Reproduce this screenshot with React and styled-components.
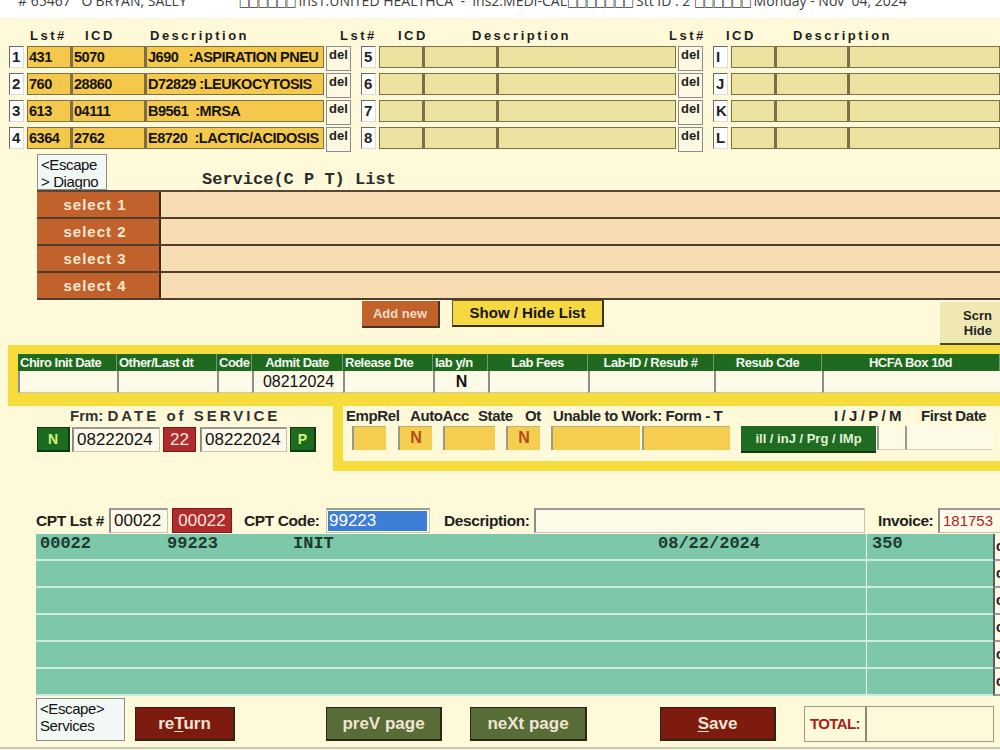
import React from 'react';
import styled, { createGlobalStyle } from 'styled-components';

const GlobalStyle = createGlobalStyle`
  html, body {
    margin: 0;
    padding: 0;
  }
  body {
    width: 1000px;
    height: 750px;
    overflow: hidden;
    background: #fefad9;
    font-family: "Liberation Sans", Arial, sans-serif;
  }
`;

const Screen = styled.div`
  width: 1000px;
  height: 750px;
  overflow: hidden;
  display: flex;
  flex-direction: column;
  background: #fefad9;
`;

const TopBar = styled.div`
  flex: none;
  height: 18px;
  overflow: hidden;
  background: #ffffff;
  display: flex;
  font-family: "Open Sans", "DejaVu Sans", sans-serif;
  font-size: 14px;
  color: #3c3c3c;
  white-space: pre;
`;

const TopText = styled.span`
  margin-top: -9px;
  margin-left: ${p => p.$ml}px;
`;

const Tofu = styled.span`
  font-family: "DejaVu Sans", sans-serif;
  font-size: 12px;
  letter-spacing: -2px;
  color: #3c3c3c;
`;

/* diagnosis lists */
const DiagHead = styled.div`
  display: flex;
  height: 18px;
  padding-top: 10px;
  padding-left: 30px;
`;

const HeadLabel = styled.div`
  width: ${p => p.$w}px;
  flex: none;
  font-weight: bold;
  font-size: 13px;
  letter-spacing: 2.5px;
  color: #1e1e1e;
  white-space: nowrap;
`;

const DiagRows = styled.div`
  display: flex;
  flex-direction: column;
  gap: 2px;
  padding-left: 9px;
`;

const DiagRow = styled.div`
  display: flex;
  gap: 10px;
`;

const DiagGroup = styled.div`
  display: flex;
  align-items: flex-start;
  width: ${p => (p.$last ? 'auto' : '342px')};
  flex: ${p => (p.$last ? '1' : 'none')};
  overflow: hidden;
`;

const NumBox = styled.div`
  flex: none;
  width: 15px;
  height: 22px;
  box-sizing: border-box;
  margin-right: 3px;
  background: #ffffff;
  border: 1px solid;
  border-color: #6a6a6a #dcdcdc #dcdcdc #6a6a6a;
  font-size: 15px;
  font-weight: bold;
  line-height: 20px;
  padding-left: 2px;
  color: #222;
`;

const DiagCell = styled.div`
  flex: ${p => (p.$w ? 'none' : '1')};
  width: ${p => (p.$w ? `${p.$w}px` : 'auto')};
  height: 22px;
  box-sizing: border-box;
  background: ${p => (p.$filled ? '#f4c84b' : '#ece3a0')};
  border: 1px solid #7d7048;
  border-left-width: ${p => (p.$first ? 1 : 2)}px;
  font-weight: bold;
  font-size: 14.5px;
  letter-spacing: -0.5px;
  line-height: 20px;
  padding-left: 1px;
  white-space: pre;
  overflow: hidden;
  color: #141414;
`;

const DelBox = styled.div`
  flex: none;
  width: 25px;
  height: 25px;
  box-sizing: border-box;
  margin-left: 2px;
  background: #fcf8e2;
  border: 1px solid #8c8c8c;
  font-weight: bold;
  font-size: 13px;
  text-align: center;
  line-height: 16px;
  color: #222;
`;

/* service list */
const ServiceHead = styled.div`
  display: flex;
  align-items: flex-end;
  margin-top: 2px;
  padding-left: 37px;
`;

const EscapeBox = styled.div`
  flex: none;
  width: ${p => p.$w}px;
  height: ${p => p.$h}px;
  margin-top: ${p => p.$mt || 0}px;
  box-sizing: border-box;
  background: #f2f9f5;
  border: 1px solid #8e8e8e;
  font-size: 15px;
  line-height: 17px;
  padding: 1px 0 0 3px;
  color: #111;
  letter-spacing: -0.4px;
  white-space: nowrap;
  overflow: hidden;
`;

const ServiceTitle = styled.div`
  margin-left: 95px;
  font-family: "Liberation Mono", "Courier New", monospace;
  font-weight: bold;
  font-size: 17px;
  color: #2c2c2c;
  line-height: 18px;
  padding-bottom: 1px;
`;

const SelectList = styled.div`
  margin-left: 37px;
  border-top: 2px solid #5a4636;
  display: flex;
  flex-direction: column;
`;

const SelectRow = styled.div`
  display: flex;
  height: 25px;
  border-bottom: 2px solid #4e3e30;
`;

const SelectBtn = styled.div`
  flex: none;
  width: 124px;
  background: #c1612b;
  border-right: 2px solid #3b2a1c;
  color: #fbe8d2;
  font-weight: bold;
  font-size: 15px;
  letter-spacing: 1px;
  text-align: center;
  line-height: 25px;
  padding-right: 6px;
  box-sizing: border-box;
`;

const SelectBody = styled.div`
  flex: 1;
  background: #f8dcb2;
`;

const ActionRow = styled.div`
  display: flex;
  align-items: flex-start;
  height: 45px;
  padding-left: 362px;
`;

const AddNew = styled.div`
  flex: none;
  margin-top: 1px;
  width: 78px;
  height: 27px;
  box-sizing: border-box;
  background: #c1612b;
  border-right: 2px solid #4a3020;
  border-bottom: 2px solid #4a3020;
  color: #f6dcc4;
  font-weight: bold;
  font-size: 13px;
  text-align: center;
  line-height: 25px;
`;

const ShowHide = styled.div`
  flex: none;
  margin: 0 0 0 12px;
  width: 152px;
  height: 27px;
  box-sizing: border-box;
  background: #f6d843;
  border: 1px solid #6a5a20;
  border-bottom: 2px solid #3a3210;
  border-right: 2px solid #3a3210;
  font-weight: bold;
  font-size: 15px;
  text-align: center;
  line-height: 23px;
  color: #151515;
`;

const ScrnHide = styled.div`
  flex: none;
  margin-left: auto;
  margin-top: 2px;
  width: 60px;
  height: 43px;
  box-sizing: border-box;
  background: #efe8b3;
  border-bottom: 2px solid #4a4530;
  font-weight: bold;
  font-size: 13px;
  line-height: 15px;
  text-align: right;
  padding: 6px 8px 0 0;
  color: #222;
`;

/* chiro frame */
const ChiroFrame = styled.div`
  margin-left: 8px;
  border: 9px solid #f6dc3d;
  border-left-width: 10px;
  border-right: 0;
  border-bottom-width: 13px;
  background: #fefad9;
`;

const ChiroGrid = styled.div`
  display: grid;
  grid-template-columns: 99px 100px 35px 91px 90px 55px 100px 126px 108px 1fr;
  grid-template-rows: 17px 22px;
`;

const ChiroHead = styled.div`
  background: #1f6a1f;
  color: #f4f8ee;
  font-weight: bold;
  font-size: 13px;
  letter-spacing: -0.5px;
  line-height: 17px;
  text-align: ${p => p.$align || 'left'};
  padding: 0 2px;
  border-right: 1px solid #6f9a6f;
  white-space: nowrap;
  overflow: hidden;
`;

const ChiroCell = styled.div`
  background: #fdfae8;
  border-left: 2px solid #8e8e8e;
  border-bottom: 1px solid #cfcab0;
  font-size: 16px;
  font-weight: ${p => (p.$bold ? 'bold' : 'normal')};
  text-align: center;
  line-height: 21px;
  color: #111;
`;

/* date of service + accident panel */
const LowerRow = styled.div`
  display: flex;
  height: 65px;
`;

const DateService = styled.div`
  flex: none;
  width: 333px;
`;

const DateLabel = styled.div`
  padding: 1px 0 0 70px;
  font-weight: bold;
  font-size: 15px;
  color: #333;
  letter-spacing: 3px;
  line-height: 17px;
  white-space: nowrap;
`;

const Plain = styled.span`
  letter-spacing: 0;
`;

const DateControls = styled.div`
  display: flex;
  margin-top: 3px;
  padding-left: 37px;
`;

const GreenSq = styled.div`
  flex: none;
  width: ${p => p.$w}px;
  height: 25px;
  margin-left: ${p => p.$ml || 0}px;
  box-sizing: border-box;
  background: #1d6b1e;
  border: 1px solid #0f3a10;
  border-right-width: 2px;
  border-bottom-width: 2px;
  color: #d6f07c;
  font-weight: bold;
  font-size: 14px;
  text-align: center;
  line-height: 22px;
`;

const TextBox = styled.div`
  flex: none;
  width: ${p => p.$w}px;
  height: ${p => p.$h || 25}px;
  margin-left: ${p => p.$ml || 0}px;
  box-sizing: border-box;
  background: #fdfae8;
  border: 1px solid #c9c4a8;
  border-left: 2px solid #8c8c8c;
  border-top: 2px solid #9a9a9a;
  font-size: ${p => p.$fs || 17}px;
  line-height: 21px;
  padding-left: 3px;
  color: ${p => p.$color || '#111'};
  white-space: nowrap;
  overflow: hidden;
`;

const RedBox = styled.div`
  flex: none;
  width: ${p => p.$w}px;
  height: 25px;
  margin-left: ${p => p.$ml || 0}px;
  box-sizing: border-box;
  background: #b02c2c;
  border: 1px solid #7a1a1a;
  color: #f6e6e0;
  font-size: 17px;
  text-align: center;
  line-height: 23px;
`;

const AccidentFrame = styled.div`
  flex: 1;
  box-sizing: border-box;
  border-left: 10px solid #f6dc3d;
  border-bottom: 10px solid #f6dc3d;
`;

const AccLabels = styled.div`
  display: flex;
  padding: 1px 0 0 3px;
  height: 19px;
`;

const AccLabel = styled.div`
  flex: none;
  width: ${p => p.$w}px;
  font-weight: bold;
  font-size: 15px;
  letter-spacing: -0.4px;
  line-height: 18px;
  color: #262626;
  white-space: nowrap;
`;

const AccFields = styled.div`
  display: flex;
  padding-left: 9px;
`;

const YellowField = styled.div`
  flex: none;
  width: ${p => p.$w}px;
  height: 24px;
  margin-left: ${p => p.$ml || 0}px;
  box-sizing: border-box;
  background: #f5ce4f;
  border-left: 2px solid #9a9a8a;
  border-top: 1px solid #c2b070;
  font-weight: bold;
  font-size: 16px;
  color: #b54a1b;
  text-align: center;
  line-height: 22px;
`;

const GreenBtn = styled.div`
  flex: none;
  width: 135px;
  height: 27px;
  margin-left: 11px;
  box-sizing: border-box;
  background: #1f6b21;
  border-bottom: 2px solid #0f3a10;
  color: #e2f2d4;
  font-weight: bold;
  font-size: 13px;
  text-align: center;
  line-height: 25px;
`;

const BlankCell = styled.div`
  flex: none;
  width: ${p => p.$w}px;
  height: 24px;
  margin-left: ${p => p.$ml || 0}px;
  box-sizing: border-box;
  background: #fdfae8;
  border-left: 2px solid #9a9a9a;
  border-bottom: 1px solid #d4cfb4;
`;

/* CPT entry */
const CptRow = styled.div`
  display: flex;
  align-items: center;
  margin-top: 37px;
  padding-left: 36px;
  height: 25px;
`;

const CptLabel = styled.div`
  flex: none;
  margin-left: ${p => p.$ml || 0}px;
  width: ${p => p.$w}px;
  font-weight: bold;
  font-size: 15.5px;
  letter-spacing: -0.4px;
  color: #1e1e1e;
  white-space: nowrap;
`;

const SelectedBox = styled.div`
  flex: none;
  width: 104px;
  height: 25px;
  box-sizing: border-box;
  background: #fdfae8;
  border: 1px solid #c9c4a8;
  border-top: 2px solid #9a9a9a;
  padding: 1px 2px 1px 1px;
`;

const Highlight = styled.div`
  height: 100%;
  background: #3d7ed6;
  color: #ffffff;
  font-size: 17px;
  line-height: 20px;
  padding-left: 1px;
`;

/* service grid */
const ServiceGrid = styled.div`
  margin-top: 1px;
  margin-left: 36px;
  display: flex;
  flex-direction: column;
`;

const GridRow = styled.div`
  display: grid;
  grid-template-columns: 127px 126px 365px 212px 127px 1fr;
  height: 27px;
`;

const GridCell = styled.div`
  background: #7dc8aa;
  border-bottom: 2px solid #cfeadf;
  border-left: ${p => (p.$divider ? '1px solid #eaf6ef' : '0')};
  font-family: "Liberation Mono", "Courier New", monospace;
  font-weight: bold;
  font-size: 17px;
  line-height: 20px;
  padding-left: ${p => p.$pl ?? 4}px;
  color: #1d3a30;
  white-space: pre;
`;

const TailCell = styled.div`
  background: #fdfae8;
  border-left: 2px solid #5a5a5a;
  border-bottom: 2px solid #9a9a9a;
  font-weight: bold;
  font-size: 14px;
  line-height: 24px;
  padding-left: 1px;
  overflow: hidden;
  color: #222;
`;

/* footer */
const Footer = styled.div`
  display: flex;
  align-items: flex-start;
  height: 51px;
  padding-left: 36px;
  border-bottom: 2px solid #c9c8bd;
`;

const FootBtn = styled.div`
  flex: none;
  margin-top: 11px;
  margin-left: ${p => p.$ml}px;
  width: ${p => p.$w}px;
  height: 34px;
  box-sizing: border-box;
  background: ${p => p.$bg};
  border: 1px solid #2e2418;
  border-right-width: 2px;
  border-bottom-width: 2px;
  color: #f2e4d2;
  font-weight: bold;
  font-size: 17px;
  text-align: center;
  line-height: 31px;

  u {
    text-decoration-thickness: 1px;
    text-underline-offset: 2px;
  }
`;

const TotalBox = styled.div`
  flex: none;
  display: flex;
  margin-top: 10px;
  margin-left: 28px;
  width: 190px;
  height: 36px;
  box-sizing: border-box;
  border: 1px solid #9a9a8a;
`;

const TotalLabel = styled.div`
  width: 62px;
  border-right: 2px solid #8a8a7a;
  color: #a52020;
  font-weight: bold;
  font-size: 15px;
  letter-spacing: -0.6px;
  line-height: 34px;
  padding-left: 5px;
  box-sizing: border-box;
`;

const diagnoses = [
  ['431', '5070', 'J690   :ASPIRATION PNEU'],
  ['760', '28860', 'D72829 :LEUKOCYTOSIS'],
  ['613', '04111', 'B9561  :MRSA'],
  ['6364', '2762', 'E8720  :LACTIC/ACIDOSIS'],
];

const midLetters = ['5', '6', '7', '8'];
const rightLetters = ['I', 'J', 'K', 'L'];

const chiroHeads = [
  ['Chiro Init Date'],
  ['Other/Last dt'],
  ['Code'],
  ['Admit Date', 'center'],
  ['Release Dte'],
  ['lab y/n'],
  ['Lab Fees', 'center'],
  ['Lab-ID / Resub #', 'center'],
  ['Resub Cde', 'center'],
  ['HCFA Box 10d', 'center'],
];

const chiroValues = ['', '', '', '08212024', '', 'N', '', '', '', ''];

const serviceRows = [
  ['00022', '99223', 'INIT', '08/22/2024', '350'],
  ['', '', '', '', ''],
  ['', '', '', '', ''],
  ['', '', '', '', ''],
  ['', '', '', '', ''],
  ['', '', '', '', ''],
];

export default function App() {
  return (
    <Screen>
      <GlobalStyle />
      <TopBar>
        <TopText $ml={18}># 65467   O'BRYAN, SALLY</TopText>
        <TopText $ml={52}>
          <Tofu>□□□□□□</Tofu> Ins1:UNITED HEALTHCA  -  Ins2:MEDI-CAL<Tofu>□□□□□□□</Tofu> Stt ID : 2 <Tofu>□□□□□□</Tofu> Monday - Nov  04, 2024
        </TopText>
      </TopBar>

      <DiagHead>
        <HeadLabel $w={55}>Lst#</HeadLabel>
        <HeadLabel $w={65}>ICD</HeadLabel>
        <HeadLabel $w={190}>Description</HeadLabel>
        <HeadLabel $w={58}>Lst#</HeadLabel>
        <HeadLabel $w={74}>ICD</HeadLabel>
        <HeadLabel $w={197}>Description</HeadLabel>
        <HeadLabel $w={57}>Lst#</HeadLabel>
        <HeadLabel $w={67}>ICD</HeadLabel>
        <HeadLabel $w={150}>Description</HeadLabel>
      </DiagHead>

      <DiagRows>
        {diagnoses.map(([lst, icd, desc], i) => (
          <DiagRow key={lst}>
            <DiagGroup>
              <NumBox>{i + 1}</NumBox>
              <DiagCell $w={44} $filled $first>{lst}</DiagCell>
              <DiagCell $w={74} $filled>{icd}</DiagCell>
              <DiagCell $w={179} $filled>{desc}</DiagCell>
              <DelBox>del</DelBox>
            </DiagGroup>
            <DiagGroup>
              <NumBox>{midLetters[i]}</NumBox>
              <DiagCell $w={44} $first />
              <DiagCell $w={74} />
              <DiagCell $w={179} />
              <DelBox>del</DelBox>
            </DiagGroup>
            <DiagGroup $last>
              <NumBox>{rightLetters[i]}</NumBox>
              <DiagCell $w={44} $first />
              <DiagCell $w={73} />
              <DiagCell />
            </DiagGroup>
          </DiagRow>
        ))}
      </DiagRows>

      <ServiceHead>
        <EscapeBox $w={70} $h={36}>&lt;Escape<br />&gt; Diagno</EscapeBox>
        <ServiceTitle>Service(C P T) List</ServiceTitle>
      </ServiceHead>

      <SelectList>
        {[1, 2, 3, 4].map(n => (
          <SelectRow key={n}>
            <SelectBtn>select {n}</SelectBtn>
            <SelectBody />
          </SelectRow>
        ))}
      </SelectList>

      <ActionRow>
        <AddNew>Add new</AddNew>
        <ShowHide>Show / Hide List</ShowHide>
        <ScrnHide>Scrn<br />Hide</ScrnHide>
      </ActionRow>

      <ChiroFrame>
        <ChiroGrid>
          {chiroHeads.map(([label, align]) => (
            <ChiroHead key={label} $align={align}>{label}</ChiroHead>
          ))}
          {chiroValues.map((v, i) => (
            <ChiroCell key={i} $bold={v === 'N'}>{v}</ChiroCell>
          ))}
        </ChiroGrid>
      </ChiroFrame>

      <LowerRow>
        <DateService>
          <DateLabel><Plain>Frm: </Plain>DATE of SERVICE</DateLabel>
          <DateControls>
            <GreenSq $w={33}>N</GreenSq>
            <TextBox $w={88} $ml={2}>08222024</TextBox>
            <RedBox $w={33} $ml={3}>22</RedBox>
            <TextBox $w={87} $ml={4}>08222024</TextBox>
            <GreenSq $w={26} $ml={3}>P</GreenSq>
          </DateControls>
        </DateService>

        <AccidentFrame>
          <AccLabels>
            <AccLabel $w={64}>EmpRel</AccLabel>
            <AccLabel $w={68}>AutoAcc</AccLabel>
            <AccLabel $w={47}>State</AccLabel>
            <AccLabel $w={28}>Ot</AccLabel>
            <AccLabel $w={281}>Unable to Work: Form - T</AccLabel>
            <AccLabel $w={87}>I / J / P / M</AccLabel>
            <AccLabel $w={80}>First Date</AccLabel>
          </AccLabels>
          <AccFields>
            <YellowField $w={34} />
            <YellowField $w={34} $ml={12}>N</YellowField>
            <YellowField $w={52} $ml={11} />
            <YellowField $w={34} $ml={11}>N</YellowField>
            <YellowField $w={89} $ml={11} />
            <YellowField $w={88} $ml={2} />
            <GreenBtn>ill / inJ / Prg / IMp</GreenBtn>
            <BlankCell $w={26} $ml={1} />
            <BlankCell $w={88} $ml={2} />
          </AccFields>
        </AccidentFrame>
      </LowerRow>

      <CptRow>
        <CptLabel $w={73}>CPT Lst #</CptLabel>
        <TextBox $w={59}>00022</TextBox>
        <RedBox $w={60} $ml={4}>00022</RedBox>
        <CptLabel $w={82} $ml={12}>CPT Code:</CptLabel>
        <SelectedBox><Highlight>99223</Highlight></SelectedBox>
        <CptLabel $w={90} $ml={14}>Description:</CptLabel>
        <TextBox $w={331} />
        <CptLabel $w={60} $ml={13}>Invoice:</CptLabel>
        <TextBox $w={70} $fs={15} $color="#b02424">181753</TextBox>
      </CptRow>

      <ServiceGrid>
        {serviceRows.map((row, i) => (
          <GridRow key={i}>
            <GridCell>{row[0]}</GridCell>
            <GridCell>{row[1]}</GridCell>
            <GridCell>{row[2]}</GridCell>
            <GridCell>{row[3]}</GridCell>
            <GridCell $divider $pl={5}>{row[4]}</GridCell>
            <TailCell>c</TailCell>
          </GridRow>
        ))}
      </ServiceGrid>

      <Footer>
        <EscapeBox $w={89} $h={43} $mt={2}>&lt;Escape&gt;<br />Services</EscapeBox>
        <FootBtn $ml={10} $w={100} $bg="#7e1b0f">re<u>T</u>urn</FootBtn>
        <FootBtn $ml={91} $w={116} $bg="#576c37">preV page</FootBtn>
        <FootBtn $ml={28} $w={117} $bg="#576c37">neXt page</FootBtn>
        <FootBtn $ml={73} $w={116} $bg="#7e1b0f"><u>S</u>ave</FootBtn>
        <TotalBox>
          <TotalLabel>TOTAL:</TotalLabel>
        </TotalBox>
      </Footer>
    </Screen>
  );
}
